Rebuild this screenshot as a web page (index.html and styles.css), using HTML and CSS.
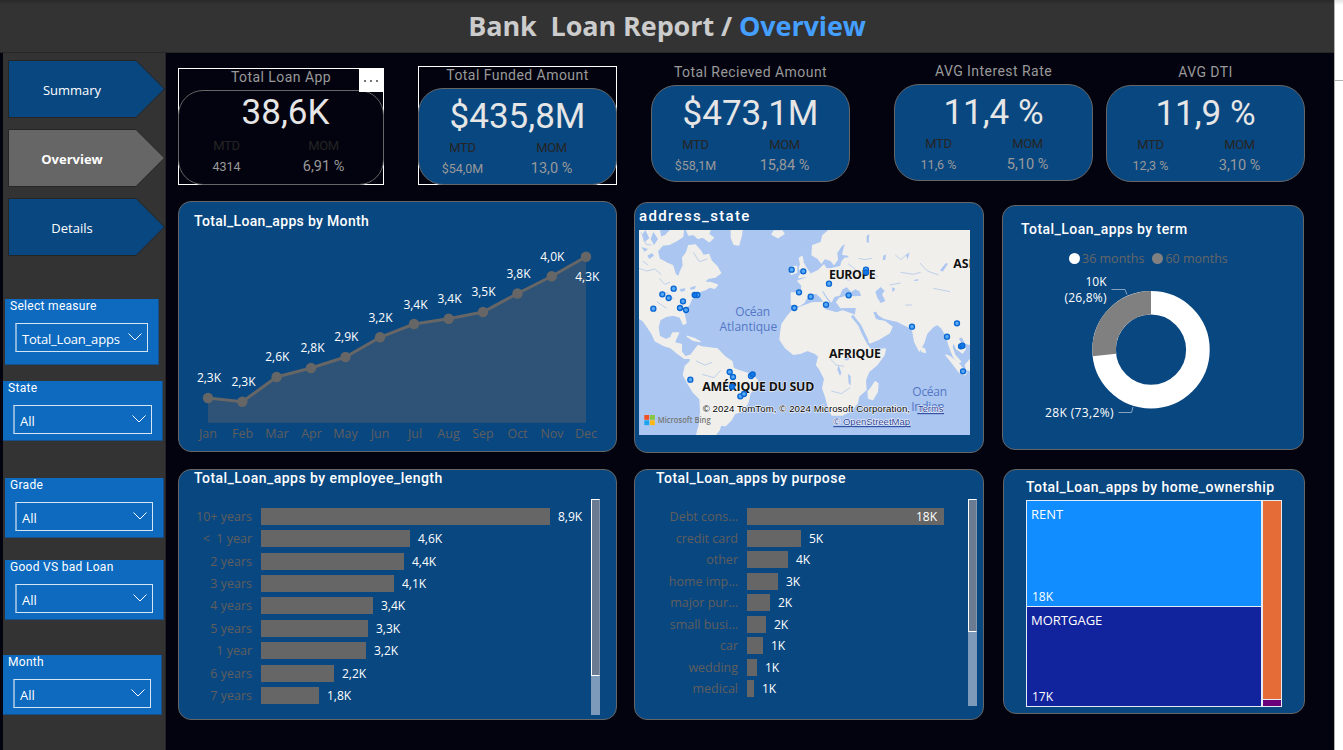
FILE: index.html
```html
<!DOCTYPE html>
<html lang="en">
<head>
<meta charset="utf-8">
<title>Bank Loan Report</title>
<link rel="stylesheet" href="styles.css">
</head>
<body>
<div class="app">
<div class="report">
  <header class="header"><h1>Bank&nbsp; Loan Report / <span>Overview</span></h1></header>
  <div class="content">
    <aside class="sidebar">
      <nav class="nav">
        <a class="nav-item"><svg viewBox="0 0 158 58"><path d="M.5.5H128L156.500 29L128 57.500H.5Z"/></svg><span>Summary</span></a>
        <a class="nav-item active"><svg viewBox="0 0 158 58"><path d="M.5.5H128L156.500 29L128 57.500H.5Z"/></svg><span>Overview</span></a>
        <a class="nav-item"><svg viewBox="0 0 158 58"><path d="M.5.5H128L156.500 29L128 57.500H.5Z"/></svg><span>Details</span></a>
      </nav>
      <div class="slicer measure"><h3>Select measure</h3><div class="select"><span>Total_Loan_apps</span><svg viewBox="0 0 14 8"><path d="M.5.5L7 7L13.500.5"/></svg></div></div>
      <div class="slicer state"><h3>State</h3><div class="select"><span>All</span><svg viewBox="0 0 14 8"><path d="M.5.5L7 7L13.500.5"/></svg></div></div>
      <div class="slicer grade"><h3>Grade</h3><div class="select"><span>All</span><svg viewBox="0 0 14 8"><path d="M.5.5L7 7L13.500.5"/></svg></div></div>
      <div class="slicer loan"><h3>Good VS bad Loan</h3><div class="select"><span>All</span><svg viewBox="0 0 14 8"><path d="M.5.5L7 7L13.500.5"/></svg></div></div>
      <div class="slicer month"><h3>Month</h3><div class="select"><span>All</span><svg viewBox="0 0 14 8"><path d="M.5.5L7 7L13.500.5"/></svg></div></div>
    </aside>

    <main class="main">
      <section class="kpis">
        <div class="kpi apps selected"><h2>Total Loan App</h2><div class="pill hollow"><div class="value">38,6K</div><div class="pair heads"><span>MTD</span><span>MOM</span></div><div class="pair nums"><span>4314</span><span>6,91 %</span></div></div><button class="more" aria-label="More options"><i></i><i></i><i></i></button></div>
        <div class="kpi funded selected"><h2>Total Funded Amount</h2><div class="pill"><div class="value">$435,8M</div><div class="pair heads"><span>MTD</span><span>MOM</span></div><div class="pair nums"><span>$54,0M</span><span>13,0 %</span></div></div></div>
        <div class="kpi received"><h2>Total Recieved Amount</h2><div class="pill"><div class="value">$473,1M</div><div class="pair heads"><span>MTD</span><span>MOM</span></div><div class="pair nums"><span>$58,1M</span><span>15,84 %</span></div></div></div>
        <div class="kpi rate"><h2>AVG Interest Rate</h2><div class="pill"><div class="value">11,4 %</div><div class="pair heads"><span>MTD</span><span>MOM</span></div><div class="pair nums"><span>11,6 %</span><span>5,10 %</span></div></div></div>
        <div class="kpi dti"><h2>AVG DTI</h2><div class="pill"><div class="value">11,9 %</div><div class="pair heads"><span>MTD</span><span>MOM</span></div><div class="pair nums"><span>12,3 %</span><span>3,10 %</span></div></div></div>
      </section>

      <section class="row row-top">
        <article class="panel by-month">
          <h2>Total_Loan_apps by Month</h2>
          <svg class="line-chart" viewBox="179 240 437 208">
            <path class="area" d="M208 398L242.300 401.800L276.600 377L311 368L345.500 357L380 337.300L414 324L448.700 318.800L483 312L517.500 293.500L551.700 276.300L586 256.800V422.700H208Z"/>
            <path class="line" d="M208 398L242.300 401.800L276.600 377L311 368L345.500 357L380 337.300L414 324L448.700 318.800L483 312L517.500 293.500L551.700 276.300L586 256.800"/>
            <g class="dots"><circle cx="208" cy="398" r="5.200"/><circle cx="242.300" cy="401.800" r="5.200"/><circle cx="276.600" cy="377" r="5.200"/><circle cx="311" cy="368" r="5.200"/><circle cx="345.500" cy="357" r="5.200"/><circle cx="380" cy="337.300" r="5.200"/><circle cx="414" cy="324" r="5.200"/><circle cx="448.700" cy="318.800" r="5.200"/><circle cx="483" cy="312" r="5.200"/><circle cx="517.500" cy="293.500" r="5.200"/><circle cx="551.700" cy="276.300" r="5.200"/><circle cx="586" cy="256.800" r="5.200"/></g>
            <g class="labels"><text x="209" y="382">2,3K</text><text x="243.500" y="386">2,3K</text><text x="277.300" y="361">2,6K</text><text x="312.500" y="352">2,8K</text><text x="346.300" y="341">2,9K</text><text x="380.500" y="322">3,2K</text><text x="415.500" y="309">3,4K</text><text x="449.500" y="303">3,4K</text><text x="483.500" y="296">3,5K</text><text x="518.500" y="278">3,8K</text><text x="552.300" y="261">4,0K</text><text x="587.300" y="281">4,3K</text></g>
            <g class="axis"><text x="208" y="438">Jan</text><text x="242.500" y="438">Feb</text><text x="277" y="438">Mar</text><text x="311.500" y="438">Apr</text><text x="345.500" y="438">May</text><text x="380" y="438">Jun</text><text x="415" y="438">Jul</text><text x="448.500" y="438">Aug</text><text x="483" y="438">Sep</text><text x="517.500" y="438">Oct</text><text x="552" y="438">Nov</text><text x="586" y="438">Dec</text></g>
          </svg>
        </article>

        <article class="panel by-state">
          <h2>address_state</h2>
          <svg class="map" viewBox="27 105 993 615">
            <rect class="sea" x="27" y="105" width="993" height="615"/>
            <g class="land">
              <path d="M27 105H88L92 128L108 120L122 105H160L158 125L138 138L118 148L98 150L82 168L88 192L112 205L128 212L136 238L146 246L152 228L160 212L158 188L170 172L176 152L196 150L212 168L220 182L236 178L244 198L262 216L272 234L256 246L234 250L222 262L240 262L262 270L254 280L240 276L226 284L208 290L196 304L184 312L178 328L164 342L162 356L168 384L160 388L150 366L130 360L108 364L90 374L84 396L88 424L108 434L122 428L128 414L146 414L136 434L134 444L154 448L154 470L166 486L184 480L182 490L164 490L144 476L122 458L98 450L76 438L66 416L50 392L38 376L27 370Z"/>
              <path d="M186 476L204 452L216 456L262 462L288 488L306 500L310 520L330 528L366 540L382 556L378 574L360 594L354 622L340 646L314 656L304 674L286 692L272 690L268 704L256 720H200L208 690L212 650L210 612L190 592L172 562L160 540L166 514L180 500Z"/>
              <path d="M304 105H336L334 122L326 150L312 148L304 128ZM426 118L432 108L456 108L462 116L444 128ZM170 105H240L236 118L250 128L238 140L218 126L204 130L190 118L176 120Z"/>
              <path d="M508 190L516 184L520 204L530 222L540 236L530 244L506 248L516 232L508 220L512 208ZM484 216L500 214L500 232L484 238Z"/>
              <path d="M546 180L548 152L574 142L578 122L598 105H1020V448L1006 444L996 424L984 430L996 452L1006 462L998 474L980 462L970 440L966 456L974 480L992 500L984 504L970 484L958 454L950 424L936 400L922 388L908 396L890 416L882 442L868 468L854 440L848 406L836 396L820 388L800 378L780 374L764 370L746 360L738 346L728 352L748 376L766 380L770 384L786 396L778 414L744 434L720 444L706 422L686 388L676 362L680 338L658 336L632 338L620 322L628 310L650 304L676 306L696 304L690 288L676 280L664 288L650 274L636 282L628 300L612 304L604 320L590 302L582 288L572 284L584 306L596 322L584 324L572 306L558 294L542 296L530 308L522 322L508 332L484 328L484 294L514 294L516 272L504 258L526 250L546 236L566 226L582 210L588 220L602 222L632 214L636 200L644 190L660 188L654 180L638 178L644 154L652 140L634 152L620 174L622 194L612 208L602 196L584 190L574 204L564 190Z"/>
              <path d="M488 346L512 336L544 324L578 322L584 344L606 350L620 354L638 348L672 360L682 390L696 422L710 448L724 466L766 462L762 480L740 510L716 530L706 556L708 584L686 604L682 624L664 646L638 660L606 660L596 640L586 602L578 580L584 552L570 524L560 510L566 484L554 474L532 466L514 474L490 478L466 458L450 434L452 414L456 388L472 364Z"/>
              <path d="M714 590L724 578L736 560L744 566L742 590L728 614L716 610ZM874 458L884 462L886 472L876 470ZM948 480L958 484L984 504L1008 534L1004 540L988 532L970 508ZM1006 510L1020 494V526L1010 524ZM172 424L196 432L210 440L190 436Z"/>
            </g>
            <g class="lake">
              <path d="M46 105L58 130L42 142L36 120ZM70 110L84 132L72 150L62 132ZM34 156L54 162L44 170ZM52 182L66 174L72 182L58 192ZM150 282L166 280L164 288L152 290ZM180 278L198 272L194 282L182 284ZM736 290L752 276L764 288L756 298L766 318L752 324L742 308ZM786 276L796 282L788 292ZM730 350L746 362L752 376L738 372ZM644 482L658 484L656 496L644 496ZM626 510L634 534L630 542L622 524ZM654 536L662 544L662 572L656 564ZM828 178L838 176L832 194ZM930 226L948 204L954 206L938 230ZM760 182L768 178L766 194L758 196ZM848 256L866 252L862 258ZM710 122L718 118L716 144L710 142Z"/>
            </g>
            <g class="rivers"><path d="M27 220L50 228L74 222L94 238M88 250L104 268L120 262M34 112L48 148L64 150M38 198L54 210M686 190L704 194L726 190M796 180L812 194L838 172M812 232L850 238L872 232M870 204L892 228L926 240M778 270L812 264M826 330L846 330M910 280L960 290M598 488L618 510L642 514M604 588L634 596L660 578M198 498L224 510L246 502M216 538L252 548L272 526M190 172L208 200L232 192M108 292L132 312M80 320L110 340M720 232L744 246M636 250L660 256M654 206L680 226"/></g>
            <path class="red-sea" d="M666 362L690 392L712 438"/>
            <g class="ocean"><text x="368" y="363" textLength="104">Océan</text><text x="355" y="407" textLength="173">Atlantique</text><text x="899" y="604" textLength="104">Océan</text><text x="894" y="648" textLength="100">Indien</text></g>
            <g class="continent"><text x="597" y="251" textLength="140">EUROPE</text><text x="970" y="219">ASIE</text><text x="597" y="488" textLength="156">AFRIQUE</text><text x="217" y="588" textLength="336">AMÉRIQUE DU SUD</text></g>
            <g class="pins"><circle cx="70" cy="341" r="7.500"/><circle cx="97" cy="298" r="7.500"/><circle cx="131" cy="281" r="7.500"/><circle cx="116" cy="309" r="7.500"/><circle cx="159" cy="319" r="7.500"/><circle cx="150" cy="339" r="7.500"/><circle cx="168" cy="345" r="7.500"/><circle cx="202" cy="300" r="7.500"/><circle class="deep" cx="194" cy="300" r="7.500"/><circle cx="485" cy="224" r="7.500"/><circle cx="520" cy="229" r="7.500"/><circle cx="597" cy="266" r="7.500"/><circle cx="507" cy="292" r="7.500"/><circle cx="542" cy="305" r="7.500"/><circle cx="588" cy="329" r="7.500"/><circle cx="493" cy="339" r="7.500"/><circle cx="656" cy="301" r="7.500"/><circle cx="708" cy="224" r="7.500"/><circle class="deep" cx="708" cy="232" r="7.500"/><circle cx="846" cy="395" r="7.500"/><circle cx="981" cy="385" r="7.500"/><circle cx="951" cy="425" r="7.500"/><circle cx="993" cy="454" r="7.500"/><circle class="deep" cx="997" cy="452" r="7.500"/><circle cx="999" cy="529" r="7.500"/><circle cx="181" cy="554" r="7.500"/><circle cx="299" cy="531" r="7.500"/><circle cx="309" cy="546" r="7.500"/><circle class="deep" cx="306" cy="575" r="7.500"/><circle cx="363" cy="543" r="7.500"/><circle class="deep" cx="368" cy="538" r="7.500"/><circle cx="331" cy="604" r="7.500"/><circle cx="342" cy="597" r="7.500"/></g>
            <g class="mslogo"><path fill="#f25022" d="M43 660h14.500v14.500H43z"/><path fill="#8bc53f" d="M60 660h14.500v14.500H60z"/><path fill="#1ba5ee" d="M43 676h14.500v14.500H43z"/><path fill="#fdb813" d="M60 676h14.500v14.500H60z"/></g>
            <text class="bing" x="83" y="685" textLength="159" lengthAdjust="spacingAndGlyphs">Microsoft Bing</text>
            <g class="credits"><text x="218" y="651" textLength="622">© 2024 TomTom, © 2024 Microsoft Corporation,</text><text class="link" x="864" y="651" textLength="76" lengthAdjust="spacingAndGlyphs">Terms</text><text class="link" x="610" y="690" textLength="230" lengthAdjust="spacingAndGlyphs">© OpenStreetMap</text><path class="rule" d="M862 656H942M610 695H842"/></g>
          </svg>
        </article>

        <article class="panel by-term">
          <h2>Total_Loan_apps by term</h2>
          <div class="legend"><i class="white"></i><span>36 months</span><i class="gray"></i><span>60 months</span></div>
          <svg class="donut" viewBox="1003 268 300 160">
            <circle class="ring" cx="1151" cy="349.700" r="46.900"/>
            <path class="ring share" d="M1104.400 355A46.900 46.900 0 0 1 1151 302.800"/>
            <path class="leader" d="M1111.500 289.500H1125L1127 294.500M1118.500 412.500H1131.500L1133 407"/>
            <text x="1106.500" y="286">10K</text><text x="1106.500" y="302" textLength="42">(26,8%)</text><text x="1113.500" y="417" textLength="68.500">28K (73,2%)</text>
          </svg>
        </article>
      </section>

      <section class="row row-bottom">
        <article class="panel by-length">
          <h2>Total_Loan_apps by employee_length</h2>
          <div class="bars">
            <div class="bar-row"><span>10+ years</span><b style="width:289px"></b><em>8,9K</em></div>
            <div class="bar-row"><span>&lt;&nbsp; 1 year</span><b style="width:149px"></b><em>4,6K</em></div>
            <div class="bar-row"><span>2 years</span><b style="width:143px"></b><em>4,4K</em></div>
            <div class="bar-row"><span>3 years</span><b style="width:133px"></b><em>4,1K</em></div>
            <div class="bar-row"><span>4 years</span><b style="width:112px"></b><em>3,4K</em></div>
            <div class="bar-row"><span>5 years</span><b style="width:107px"></b><em>3,3K</em></div>
            <div class="bar-row"><span>1 year</span><b style="width:105px"></b><em>3,2K</em></div>
            <div class="bar-row"><span>6 years</span><b style="width:73px"></b><em>2,2K</em></div>
            <div class="bar-row"><span>7 years</span><b style="width:58px"></b><em>1,8K</em></div>
          </div>
          <div class="scroll"><i></i></div>
        </article>

        <article class="panel by-purpose">
          <h2>Total_Loan_apps by purpose</h2>
          <div class="bars">
            <div class="bar-row"><span>Debt cons...</span><b style="width:197px"></b><em class="inside">18K</em></div>
            <div class="bar-row"><span>credit card</span><b style="width:54px"></b><em>5K</em></div>
            <div class="bar-row"><span>other</span><b style="width:41px"></b><em>4K</em></div>
            <div class="bar-row"><span>home imp...</span><b style="width:31px"></b><em>3K</em></div>
            <div class="bar-row"><span>major pur...</span><b style="width:23px"></b><em>2K</em></div>
            <div class="bar-row"><span>small busi...</span><b style="width:19px"></b><em>2K</em></div>
            <div class="bar-row"><span>car</span><b style="width:16px"></b><em>1K</em></div>
            <div class="bar-row"><span>wedding</span><b style="width:10px"></b><em>1K</em></div>
            <div class="bar-row"><span>medical</span><b style="width:7px"></b><em>1K</em></div>
          </div>
          <div class="scroll"><i></i></div>
        </article>

        <article class="panel by-home">
          <h2>Total_Loan_apps by home_ownership</h2>
          <div class="treemap">
            <div class="tile rent"><span>RENT</span><em>18K</em></div>
            <div class="tile mortgage"><span>MORTGAGE</span><em>17K</em></div>
            <div class="tile own"></div>
            <div class="tile other"></div>
          </div>
        </article>
      </section>
    </main>
  </div>
</div>
<div class="gutter"><div></div></div>
</div>
</body>
</html>
```
FILE: styles.css
```css
* { box-sizing: border-box; margin: 0; padding: 0; }
body { width: 1343px; height: 750px; overflow: hidden; background: #fff; font-family: "Open Sans", "Noto Sans", sans-serif; }
h1, h2, h3 { font-weight: 400; white-space: nowrap; }
svg { display: block; }
i, em { font-style: normal; }
.app { display: flex; height: 750px; }
.report { width: 1334px; height: 750px; background: #03030f; display: flex; flex-direction: column; }
.gutter { flex: 1; border-left: 1px solid #b3b0ad; background: #fff; }
.gutter div { height: 81px; border-bottom: 1px solid #b3b0ad; background: linear-gradient(#e4e4e4, #fff 5px); }
.header { height: 53px; background: linear-gradient(#292929, #333 5px); border-bottom: 1px solid #262628; text-align: center; }
.header h1 { font-size: 27px; font-weight: 700; line-height: 52px; color: #ccc; letter-spacing: -.1px; }
.header span { color: #449fff; }
.content { flex: 1; display: flex; }

/* sidebar */
.sidebar { width: 163px; margin-left: 3px; background: #333; border-right: 1px solid #252527; padding-top: 7px; }
.nav { display: flex; flex-direction: column; gap: 11px; padding-left: 5px; }
.nav-item { display: grid; width: 158px; height: 58px; color: #fff; font-size: 13px; }
.nav-item > * { grid-area: 1 / 1; }
.nav-item svg { width: 158px; height: 58px; fill: #094780; stroke: #252525; }
.nav-item span { width: 128px; text-align: center; line-height: 60px; }
.nav-item.active { font-weight: 700; }
.nav-item.active svg { fill: #666; }
.slicer { height: 60px; background: #0d6abf; border-right: 1px solid #174f8a; border-bottom: 1px solid #174f8a; color: #fff; }
.slicer h3 { font: 400 12px/14px Roboto, sans-serif; padding-left: 5px; letter-spacing: .3px; }
.select { height: 29px; margin: 10px 10px 0; border: 1px solid #d5e5f4; border-left: 2px solid #86b4df; display: flex; align-items: center; justify-content: space-between; padding: 2px 5px 0 5px; font-size: 13px; }
.select svg { width: 14px; height: 8px; flex: none; fill: none; stroke: #fff; margin-bottom: 3px; }
.measure { width: 154px; height: 66px; margin: 43px 0 0 2px; }
.measure .select { letter-spacing: -.2px; }
.state { width: 160px; margin-top: 16px; }
.grade { width: 159px; margin: 37px 0 0 2px; }
.loan { width: 159px; margin: 22px 0 0 2px; }
.month { width: 159px; margin-top: 35px; }

/* key figures */
.main { width: 1168px; }
.kpis { display: flex; height: 148px; padding-left: 12px; }
.kpi { position: relative; width: 199px; height: 119px; font-family: Roboto, sans-serif; }
.kpi h2 { height: 22px; text-align: center; font-size: 14px; line-height: 18px; color: #999; letter-spacing: .45px; }
.pill { height: 97px; border: 1px solid #666; border-radius: 25px; background: #094780; padding-top: 6px; }
.hollow { background: none; height: 95px; padding-top: 0; }
.apps { width: 206px; height: 117px; margin-top: 15px; }
.funded { margin: 13px 0 0 34px; }
.received { margin: 10px 0 0 34px; }
.rate { margin: 9px 0 0 44px; }
.dti { margin: 10px 0 0 13px; }
.selected { box-shadow: inset 0 0 0 1px #fff; }
.value { font-size: 35px; line-height: 44px; text-align: center; color: #e6e6e6; }
.hollow .value { padding-left: 9px; }
.pair { display: grid; grid-template-columns: 87px 91px; text-align: center; }
.hollow .pair { grid-template-columns: 95px 99px; }
.hollow .heads { margin-top: 2px; }
.heads { font-size: 13px; line-height: 17px; color: #252423; letter-spacing: -.3px; }
.nums { font-size: 14.500px; line-height: 26px; color: #999; }
.nums span:first-child { font-size: 12.500px; }
.more { position: absolute; right: 1px; top: 1px; width: 24px; height: 23px; border: 0; background: #fff; display: flex; gap: 4px; align-items: center; justify-content: center; }
.more i { width: 2px; height: 2px; background: #777; }

/* chart panels */
.row { display: flex; padding-left: 12px; }
.row-top { height: 268px; }
.panel { position: relative; background: #094780; border: 1px solid #666; border-radius: 13px; overflow: hidden; color: #fff; height: 251px; width: 439px; }
.panel h2 { font: 500 14px/18px Roboto, sans-serif; letter-spacing: .46px; padding-left: 15px; }
.panel.by-month h2 { padding-top: 10px; letter-spacing: .33px; }
.line-chart { width: 437px; height: 208px; margin-top: 10px; }
.area { fill: #666; fill-opacity: .4; }
.line { fill: none; stroke: #666; stroke-width: 3; }
.dots { fill: #666; }
.labels { fill: #fff; font-size: 12px; text-anchor: middle; }
.axis { fill: #605e5c; font-size: 12.500px; text-anchor: middle; }
.by-state { width: 350px; margin: 1px 0 0 17px; }
.panel.by-state h2 { font-size: 15px; letter-spacing: 1.350px; padding: 4px 0 0 4px; height: 27px; }
.map { width: 331px; height: 205px; margin-left: 4px; }
.sea { fill: #abc6f1; }
.land { fill: #f0efeb; stroke: #f0efeb; stroke-width: 4; stroke-linejoin: round; }
.lake { fill: #abc6f1; }
.rivers { fill: none; stroke: #bfd0eb; stroke-width: 3; }
.red-sea { fill: none; stroke: #abc6f1; stroke-width: 8; }
.ocean { fill: #5477c5; font-size: 36px; text-anchor: middle; }
.continent { fill: #111; font-size: 37px; font-weight: 700; stroke: #f5f4f1; stroke-width: 3; paint-order: stroke; }
.pins { fill: #58a9f5; stroke: #0966d2; stroke-width: 4; }
.pins .deep { fill: #1278e6; }
.bing { fill: #767676; font: 600 28px "Open Sans", sans-serif; }
.credits { font: 29px "Liberation Sans", sans-serif; fill: #000; stroke: #fff; stroke-width: 3; paint-order: stroke; }
.credits .link { fill: #1f3d96; }
.credits .rule { stroke: #1f3d96; stroke-width: 3; }
.by-term { width: 302px; height: 245px; margin: 4px 0 0 18px; }
.by-term h2 { padding: 14px 0 0 18px; }
.legend { display: flex; align-items: center; height: 18px; margin: 11px 0 0 66px; font-size: 12.500px; color: #666; letter-spacing: 0; }
.legend i { width: 11px; height: 11px; border-radius: 50%; margin-right: 2px; }
.legend span { margin-right: 8px; }
.legend .white { background: #fff; }
.legend .gray { background: #808080; }
.donut { width: 300px; height: 160px; margin-top: 1px; }
.donut text { font-size: 12px; fill: #fff; text-anchor: end; }
.ring { fill: none; stroke-width: 23.600; stroke: #fff; }
.share { stroke: #808080; }
.leader { fill: none; stroke: #84a3c0; }

/* bar charts */
.by-length h2, .by-purpose h2 { margin-top: -1px; }
.bars { margin-top: 18px; display: flex; flex-direction: column; }
.bar-row { display: flex; align-items: center; height: 22.450px; font-size: 12px; line-height: 17px; }
.bar-row span { width: 73px; margin-right: 9px; text-align: right; color: #605e5c; font-size: 12.500px; white-space: nowrap; }
.bar-row b { height: 17px; background: #666; }
.bar-row em { margin-left: 8px; }
.by-purpose { width: 350px; margin-left: 17px; }
.by-purpose h2 { padding-left: 21px; }
.by-purpose .bars { margin-top: 19px; }
.by-purpose .bar-row { height: 21.500px; }
.by-purpose .bar-row span { width: 103px; }
.bar-row .inside { margin-left: -28px; }
.scroll { position: absolute; left: 412px; top: 29px; width: 9px; height: 216px; background: #7d9aba; }
.scroll i { display: block; height: 177px; background: #6a7b92; border: 1px solid #fff; border-right-color: #8497ad; }
.by-purpose .scroll { left: 333px; height: 207px; }
.by-purpose .scroll i { height: 133px; }
.by-home { width: 302px; height: 245px; margin-left: 19px; }
.by-home h2 { padding: 8px 0 0 22px; height: 30px; }
.treemap { width: 256px; height: 207px; margin-left: 22px; display: grid; grid-template: 105px 92px 6px / 234px 18px; gap: 1px 2px; padding: 1px; background: #e5ebf3; }
.tile { display: flex; flex-direction: column; justify-content: space-between; padding: 4px 0 0 4px; line-height: 18px; font-size: 13px; }
.tile em { font-size: 12px; padding-left: 1px; }
.rent { background: #118dff; grid-area: 1 / 1; }
.mortgage { background: #12239e; grid-area: 2 / 1 / 4 / 2; }
.own { background: #e66c37; grid-area: 1 / 2 / 3 / 3; }
.other { background: #6b007b; grid-area: 3 / 2; padding: 0; }
```
